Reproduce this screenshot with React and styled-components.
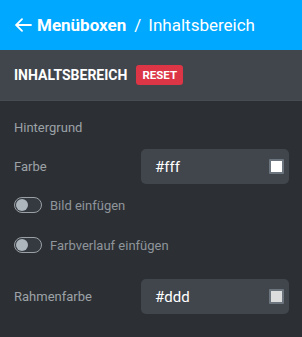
import React from "react";
import styled, { createGlobalStyle } from "styled-components";

const Global = createGlobalStyle`
  html, body { margin: 0; padding: 0; background: #2c3034; }
  body { font-family: Roboto, "Liberation Sans", Arial, sans-serif; }
  * { box-sizing: border-box; }
`;

const Page = styled.div`
  width: 302px;
  height: 337px;
  background: #2c3034;
  overflow: hidden;
`;

const Header = styled.div`
  height: 50px;
  background: #00a8ff;
  display: flex;
  align-items: center;
  padding-left: 15px;
  color: #fff;
  font-size: 17px;
`;

const Back = styled.svg`
  width: 17px;
  height: 14px;
  margin-right: 5px;
  flex: none;
`;

const Crumb = styled.span`
  font-weight: ${(p) => (p.$bold ? 700 : 400)};
`;

const Sep = styled.span`
  margin: 0 7px 0 8px;
`;

const SectionBar = styled.div`
  height: 51px;
  background: #41464d;
  display: flex;
  align-items: center;
  padding-left: 14px;
  gap: 9px;
  border-bottom: 1px solid #464b52;
`;

const SectionTitle = styled.span`
  color: #fff;
  font-weight: 700;
  font-size: 14px;
`;

const Badge = styled.span`
  background: #dc3545;
  color: #fff;
  font-weight: 700;
  font-size: 11.5px;
  height: 20px;
  padding: 0 6px;
  border-radius: 3px;
  display: inline-flex;
  align-items: center;
`;

const Body = styled.div`
  padding: 17px 13px 0 14px;
  display: flex;
  flex-direction: column;
`;

const Group = styled.div`
  color: #9da2a7;
  font-size: 13px;
  line-height: 20px;
  margin-bottom: 11px;
`;

const FieldRow = styled.div`
  display: flex;
  align-items: center;
  justify-content: space-between;
  margin-top: ${(p) => p.$mt || 0}px;
`;

const Label = styled.span`
  color: #9da2a7;
  font-size: 13px;
`;

const ColorInput = styled.div`
  width: 148px;
  height: 35px;
  background: #41464d;
  border-radius: 5px;
  display: flex;
  align-items: center;
  justify-content: space-between;
  padding: 0 5px 0 14px;
  color: #fff;
  font-size: 15px;
`;

const Swatch = styled.span`
  width: 15px;
  height: 15px;
  border: 2px solid #6c757d;
  border-radius: 1px;
  background: ${(p) => p.$color};
`;

const ToggleRow = styled.div`
  height: 40px;
  display: flex;
  align-items: center;
  gap: 8px;
  margin-top: ${(p) => p.$mt || 0}px;
`;

const Toggle = styled.span`
  width: 28px;
  height: 16px;
  border-radius: 8px;
  border: 1px solid #9aa0a6;
  background: #343a40;
  position: relative;
  flex: none;
  &::after {
    content: "";
    position: absolute;
    left: 1px;
    top: 1px;
    width: 12px;
    height: 12px;
    border-radius: 50%;
    background: #adb5bd;
  }
`;

const ToggleLabel = styled.span`
  color: #8f959b;
  font-size: 13px;
`;

export default function App() {
  return (
    <Page>
      <Global />
      <Header>
        <Back viewBox="0 0 17 14" fill="none" stroke="#fff" strokeWidth="1.8" strokeLinecap="round" strokeLinejoin="round">
          <path d="M16 7H1.5" />
          <path d="M7 1.2L1.2 7L7 12.8" />
        </Back>
        <Crumb $bold>Menüboxen</Crumb>
        <Sep>/</Sep>
        <Crumb>Inhaltsbereich</Crumb>
      </Header>
      <SectionBar>
        <SectionTitle>INHALTSBEREICH</SectionTitle>
        <Badge>RESET</Badge>
      </SectionBar>
      <Body>
        <Group>Hintergrund</Group>
        <FieldRow>
          <Label>Farbe</Label>
          <ColorInput>
            #fff
            <Swatch $color="#fff" />
          </ColorInput>
        </FieldRow>
        <ToggleRow $mt={1}>
          <Toggle />
          <ToggleLabel>Bild einfügen</ToggleLabel>
        </ToggleRow>
        <ToggleRow>
          <Toggle />
          <ToggleLabel>Farbverlauf einfügen</ToggleLabel>
        </ToggleRow>
        <FieldRow $mt={14}>
          <Label>Rahmenfarbe</Label>
          <ColorInput>
            #ddd
            <Swatch $color="#ddd" />
          </ColorInput>
        </FieldRow>
      </Body>
    </Page>
  );
}
